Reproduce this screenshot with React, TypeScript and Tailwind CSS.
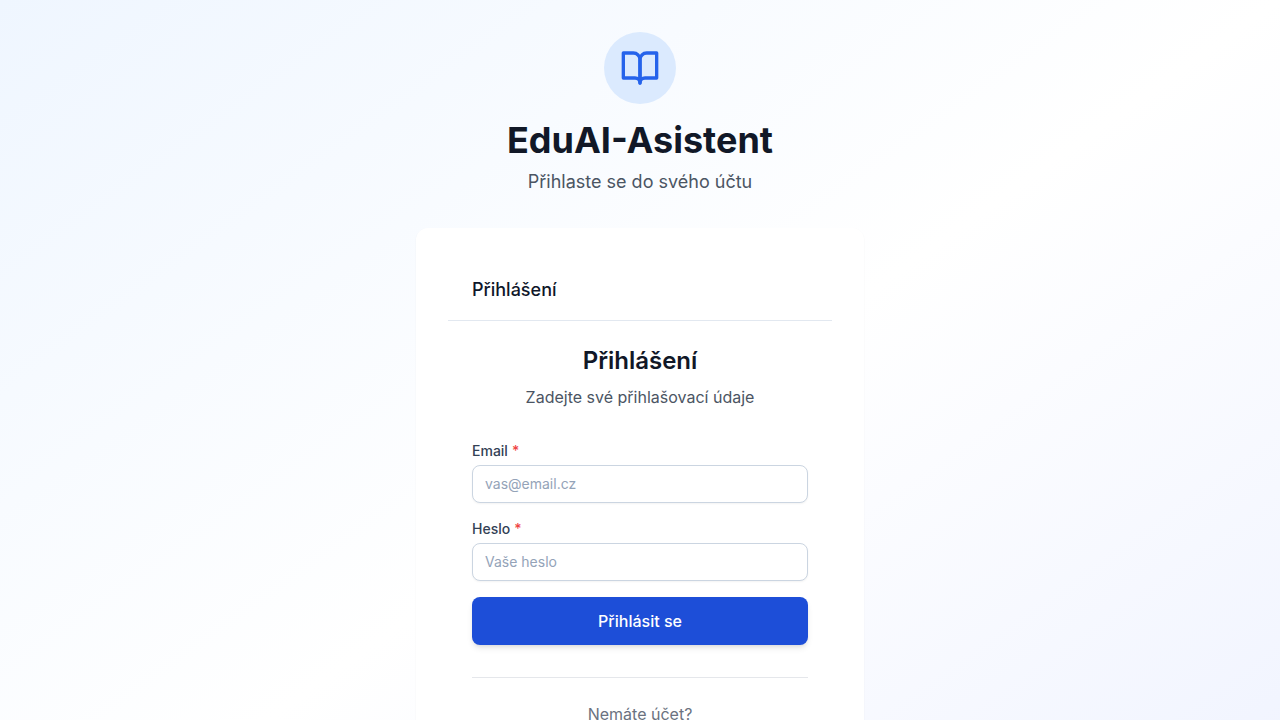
type FieldProps = {
  id: string;
  label: string;
  type: string;
  placeholder: string;
};

function BookIcon() {
  return (
    <svg
      viewBox="0 0 24 24"
      fill="none"
      stroke="currentColor"
      strokeWidth="2"
      strokeLinecap="round"
      strokeLinejoin="round"
      className="size-10 text-[#2563eb]"
      aria-hidden="true"
    >
      <path d="M2 3h6a4 4 0 0 1 4 4v14a3 3 0 0 0-3-3H2z" />
      <path d="M22 3h-6a4 4 0 0 0-4 4v14a3 3 0 0 1 3-3h7z" />
    </svg>
  );
}

function Field({ id, label, type, placeholder }: FieldProps) {
  return (
    <div>
      <label htmlFor={id} className="mb-1 block text-sm font-medium text-[#334155]">
        {label}
        <span className="ml-1 text-[#ef4444]">*</span>
      </label>
      <input
        id={id}
        name={id}
        type={type}
        required
        placeholder={placeholder}
        className="block w-full rounded-lg border border-[#cbd5e1] bg-white px-3 py-2 text-sm text-[#0f172a] shadow-xs placeholder:text-[#94a3b8]"
      />
    </div>
  );
}

export default function App() {
  return (
    <div className="min-h-screen bg-[linear-gradient(to_bottom_right,#eff6ff,#ffffff,#eef2ff)] px-4 pt-8 pb-8 font-['Inter',sans-serif]">
      <main className="mx-auto w-full max-w-md">
        <header className="mb-8 text-center">
          <div className="mb-4 flex justify-center">
            <div className="rounded-full bg-[#dbeafe] p-4">
              <BookIcon />
            </div>
          </div>
          <h1 className="mb-2 text-4xl font-bold text-[#111827]">EduAI-Asistent</h1>
          <p className="text-lg text-[#4b5563]">Přihlaste se do svého účtu</p>
        </header>

        <section className="rounded-xl bg-white p-8 shadow-xs">
          <div className="border-b border-[#e2e8f0] px-6 py-4">
            <h3 className="text-lg font-medium text-[#0f172a]">Přihlášení</h3>
          </div>
          <div className="p-6">
            <div className="mb-8 text-center">
              <h2 className="mb-2 text-2xl font-semibold text-[#111827]">Přihlášení</h2>
              <p className="text-[#4b5563]">Zadejte své přihlašovací údaje</p>
            </div>
            <form className="flex flex-col gap-4" onSubmit={(event) => event.preventDefault()}>
              <Field id="email" label="Email" type="email" placeholder="vas@email.cz" />
              <Field id="password" label="Heslo" type="password" placeholder="Vaše heslo" />
              <button
                type="submit"
                className="w-full rounded-lg bg-[#1d4ed8] px-6 py-3 font-medium text-white shadow-md"
              >
                Přihlásit se
              </button>
            </form>
            <div className="mt-8 border-t border-[#e5e7eb] pt-6 pb-24 text-center">
              <p className="text-[#6b7280]">Nemáte účet?</p>
            </div>
          </div>
        </section>
      </main>
    </div>
  );
}
